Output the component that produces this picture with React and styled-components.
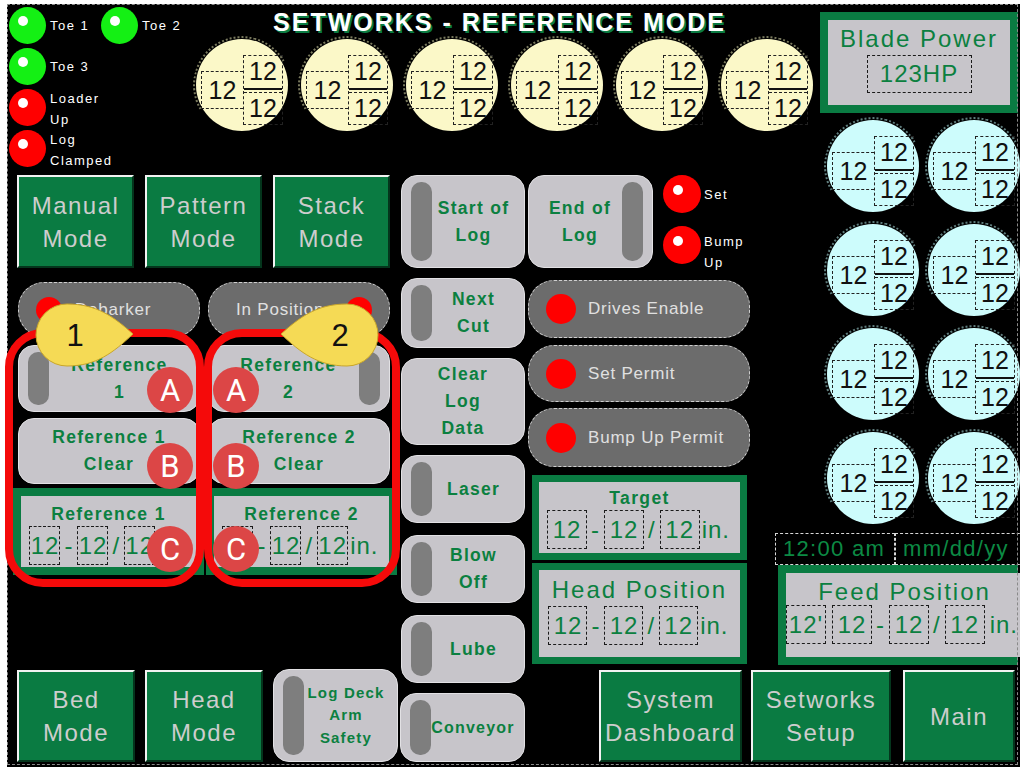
import React from 'react';
import styled, { createGlobalStyle } from 'styled-components';

const GREEN = '#0a7b42';
const TEXT_GREEN = '#0b8040';
const LIGHT = '#c7c5ca';

const GlobalStyle = createGlobalStyle`
  html, body {
    margin: 0;
    padding: 0;
    background: #000;
  }
  body {
    font-family: "Liberation Sans", Arial, sans-serif;
  }
`;

const Screen = styled.div`
  position: relative;
  width: 1020px;
  height: 767px;
  overflow: hidden;
  background: #000;
  display: grid;
  grid-template-columns: 400px 127px 221px 272px;
  grid-template-rows: 172px 595px;
  grid-template-areas:
    'head head head right'
    'left mid ctrl right';

  &::before {
    content: '';
    position: absolute;
    inset: 0;
    border-top: 4px solid #fff;
    border-left: 7px solid #fff;
    pointer-events: none;
  }
  &::after {
    content: '';
    position: absolute;
    left: 7px;
    top: 4px;
    right: 2px;
    bottom: 2px;
    border: 1px dashed #8a8a8a;
    pointer-events: none;
  }
`;

/* ---------- header ---------- */

const Header = styled.div`
  grid-area: head;
  display: flex;
`;

const Indicators = styled.div`
  flex: none;
  width: 190px;
  box-sizing: border-box;
  padding: 7px 0 0 9px;
  display: flex;
  flex-direction: column;
  gap: 4px;
`;

const LampRow = styled.div`
  display: flex;
  align-items: center;
  height: 37px;
  gap: 8px;
`;

const LampItem = styled.div`
  display: flex;
  align-items: center;
  gap: 4px;
  width: ${p => (p.$w ? `${p.$w}px` : 'auto')};
`;

const Lamp = styled.span`
  position: relative;
  flex: none;
  width: ${p => p.$size || 37}px;
  height: ${p => p.$size || 37}px;
  border-radius: 50%;
  background: ${p => (p.$on ? '#14f014' : '#ff0000')};

  &::after {
    content: '';
    position: absolute;
    left: 39%;
    top: 39%;
    width: 10px;
    height: 10px;
    border-radius: 50%;
    background: #fff;
    transform: translate(-50%, -50%);
  }
`;

const LampLabel = styled.span`
  color: #fff;
  font-size: 13px;
  line-height: 21px;
  letter-spacing: 1.5px;
  white-space: nowrap;
  margin-top: ${p => p.$mt || 0}px;
`;

const HeaderCenter = styled.div`
  flex: none;
  width: 625px;
  box-sizing: border-box;
  padding-left: 6px;
  display: flex;
  flex-direction: column;
`;

const Title = styled.div`
  margin-top: 7px;
  padding-right: 12px;
  text-align: center;
  color: #fff;
  font-weight: bold;
  font-size: 25px;
  line-height: 30px;
  letter-spacing: 2px;
  text-shadow: 2px 2px 0 ${GREEN};
`;

const DialRow = styled.div`
  margin-top: 2px;
  display: flex;
  gap: 13px;
`;

const DialFace = styled.div`
  position: relative;
  flex: none;
  width: 92px;
  height: 92px;
  box-sizing: border-box;
  padding-top: 10px;
  border-radius: 50%;
  background: ${p => (p.$tone === 'cyan' ? '#cdfcfc' : '#fbf8c8')};
  display: flex;
  align-items: center;
  justify-content: center;
  color: #111;
  font-size: 25px;

  &::before {
    content: '';
    position: absolute;
    inset: -3px;
    border-radius: 50%;
    border: 2px dotted ${p => (p.$tone === 'cyan' ? '#5f7d7d' : '#7a7a5e')};
    border-right-color: transparent;
    border-bottom-color: transparent;
    transform: rotate(15deg);
  }
`;

const WholeBox = styled.div`
  box-sizing: border-box;
  width: 42px;
  height: 38px;
  border: 1px dashed #222;
  border-right: none;
  display: flex;
  align-items: center;
  justify-content: center;
`;

const FracBox = styled.div`
  box-sizing: border-box;
  width: 40px;
  height: 70px;
  border: 1px dashed #222;
  display: flex;
  flex-direction: column;
`;

const FracNum = styled.div`
  flex: 1;
  display: flex;
  align-items: center;
  justify-content: center;
  border-bottom: 2px solid #111;
`;

const FracDen = styled.div`
  flex: 1;
  margin-top: 2px;
  display: flex;
  align-items: center;
  justify-content: center;
  border-top: 1px dashed #222;
`;

const Dial = ({ tone }) => (
  <DialFace $tone={tone}>
    <WholeBox>12</WholeBox>
    <FracBox>
      <FracNum>12</FracNum>
      <FracDen>12</FracDen>
    </FracBox>
  </DialFace>
);

/* ---------- buttons ---------- */

const GreenButton = styled.div`
  box-sizing: border-box;
  flex: none;
  width: ${p => p.$w}px;
  height: ${p => p.$h || 93}px;
  margin-left: ${p => p.$ml || 0}px;
  display: flex;
  align-items: center;
  justify-content: center;
  text-align: center;
  background: ${GREEN};
  border-top: 2px solid #f2f2f2;
  border-left: 2px solid #f2f2f2;
  border-right: 2px solid #04351c;
  border-bottom: 2px solid #04351c;
  color: #cdcdcd;
  font-size: 24px;
  line-height: 33px;
  letter-spacing: 1.5px;
`;

const LightButton = styled.div`
  box-sizing: border-box;
  flex: none;
  width: ${p => p.$w}px;
  height: ${p => p.$h}px;
  margin-top: ${p => p.$mt || 0}px;
  margin-left: ${p => p.$ml || 0}px;
  display: flex;
  flex-direction: ${p => (p.$bar === 'right' ? 'row-reverse' : 'row')};
  padding: 6px 9px;
  border-radius: 16px;
  background: ${LIGHT};
  border: 1px solid #e2e1e4;
  color: ${TEXT_GREEN};
  font-weight: bold;
  font-size: ${p => p.$fs || 17.5}px;
  line-height: ${p => p.$lh || 27}px;
  letter-spacing: ${p => (p.$ls === undefined ? 1.3 : p.$ls)}px;
  text-align: center;
`;

const SideBar = styled.span`
  flex: none;
  width: 21px;
  border-radius: 10px;
  background: #7e7e7e;
`;

const ButtonText = styled.span`
  flex: 1;
  display: flex;
  flex-direction: column;
  justify-content: center;
  align-items: center;
  white-space: nowrap;
`;

const Push = ({ bar, children, ...rest }) => (
  <LightButton $bar={bar} {...rest}>
    {bar && <SideBar />}
    <ButtonText>{children}</ButtonText>
  </LightButton>
);

const Pill = styled.div`
  box-sizing: border-box;
  flex: none;
  width: ${p => p.$w || 222}px;
  height: ${p => p.$h}px;
  margin-top: ${p => p.$mt || 0}px;
  margin-left: ${p => p.$ml || 0}px;
  display: flex;
  align-items: center;
  gap: 12px;
  padding: 0 17px;
  background: #6c6c6c;
  border: 1px dashed #cfcfcf;
  border-radius: 26px;
  color: #e0e0e0;
  font-size: 17px;
  letter-spacing: 0.8px;
  white-space: nowrap;
`;

const PillDot = styled.span`
  flex: none;
  width: ${p => p.$size || 30}px;
  height: ${p => p.$size || 30}px;
  border-radius: 50%;
  background: #ff0000;
`;

const PillText = styled.span`
  flex: 1;
  text-align: ${p => p.$align || 'left'};
  padding: ${p => p.$pad || '0'};
`;

/* ---------- readouts ---------- */

const Readout = styled.div`
  box-sizing: border-box;
  flex: none;
  width: ${p => p.$w}px;
  height: ${p => p.$h}px;
  margin-top: ${p => p.$mt || 0}px;
  margin-left: ${p => p.$ml || 0}px;
  padding: ${p => p.$pad || 7}px;
  background: ${GREEN};
  display: flex;
`;

const ReadoutInner = styled.div`
  flex: 1;
  background: ${LIGHT};
  display: flex;
  flex-direction: column;
  align-items: center;
  color: ${TEXT_GREEN};
`;

const ReadoutTitle = styled.div`
  padding-top: ${p => p.$pt || 0}px;
  font-size: ${p => (p.$small ? 17.5 : 24)}px;
  font-weight: ${p => (p.$small ? 'bold' : 'normal')};
  line-height: ${p => (p.$small ? 22 : 30)}px;
  letter-spacing: ${p => (p.$small ? 1.4 : 2)}px;
  white-space: nowrap;
`;

const NumRow = styled.div`
  margin-top: ${p => p.$mt || 0}px;
  display: flex;
  align-items: center;
  font-size: 24px;
  letter-spacing: 1px;
  white-space: nowrap;
`;

const NumBox = styled.span`
  box-sizing: border-box;
  flex: none;
  width: ${p => p.$w || 40}px;
  height: ${p => p.$h || 39}px;
  border: 1px dashed ${p => p.$line || '#1a1a1a'};
  display: flex;
  align-items: center;
  justify-content: center;
`;

const Sep = styled.span`
  margin: 0 ${p => p.$m || 4}px;
`;

const Inches = ({ w }) => (
  <>
    <NumBox $w={w}>12</NumBox>
    <Sep>-</Sep>
    <NumBox $w={w}>12</NumBox>
    <Sep>/</Sep>
    <NumBox $w={w}>12</NumBox>
    <Sep $m={2}>in.</Sep>
  </>
);

/* ---------- left column ---------- */

const LeftCol = styled.div`
  grid-area: left;
  display: flex;
  flex-direction: column;
`;

const ButtonRow = styled.div`
  display: flex;
  align-items: flex-end;
  gap: ${p => p.$gap || 0}px;
  margin-top: ${p => p.$mt || 0}px;
  padding-left: ${p => p.$pl || 0}px;
  height: ${p => (p.$h ? `${p.$h}px` : 'auto')};
`;

const Group = styled.div`
  position: relative;
  margin-top: 14px;
  display: flex;
  flex-direction: column;
`;

const BottomRow = styled(ButtonRow)`
  margin-top: auto;
  margin-bottom: 5px;
`;

const RedFrame = styled.div`
  position: absolute;
  left: ${p => p.$x}px;
  top: ${p => p.$y}px;
  width: ${p => p.$w}px;
  height: ${p => p.$h}px;
  box-sizing: border-box;
  border: 8px solid #f50a0a;
  border-radius: 38px;
  z-index: 2;
  pointer-events: none;
`;

const CalloutWrap = styled.svg`
  position: absolute;
  left: ${p => p.$x}px;
  top: ${p => p.$y}px;
  z-index: 3;
  overflow: visible;
`;

const Badge = styled.div`
  position: absolute;
  left: ${p => p.$x}px;
  top: ${p => p.$y}px;
  width: 46px;
  height: 46px;
  border-radius: 50%;
  background: #dc4646;
  color: #fff;
  font-family: Roboto, "Liberation Sans", sans-serif;
  font-size: 31px;
  display: flex;
  align-items: center;
  justify-content: center;
  z-index: 4;
`;

const Callout = ({ x, y, label, flip }) => (
  <CalloutWrap $x={x} $y={y} width="102" height="64" viewBox="0 0 102 64">
    <g transform={flip ? 'translate(102 0) scale(-1 1)' : undefined}>
      <path
        d="M100 31 C80 13 63 1 34 1 A31 31 0 0 0 34 63 C63 63 80 50 100 31 Z"
        fill="#f5da55"
        stroke="#c9a62a"
        strokeWidth="1"
      />
    </g>
    <text
      x={flip ? 61 : 42}
      y="43"
      textAnchor="middle"
      fontFamily="Liberation Sans, Arial, sans-serif"
      fontSize="31"
      fill="#111"
    >
      {label}
    </text>
  </CalloutWrap>
);

/* ---------- middle / control columns ---------- */

const MidCol = styled.div`
  grid-area: mid;
  display: flex;
  flex-direction: column;
`;

const CtrlCol = styled.div`
  grid-area: ctrl;
  display: flex;
  flex-direction: column;
`;

const TopRow = styled.div`
  margin-top: 3px;
  height: 93px;
  display: flex;
`;

const LampStack = styled.div`
  margin-left: 10px;
  display: flex;
  flex-direction: column;
  gap: 13px;
`;

const SmallLampRow = styled.div`
  display: flex;
  align-items: center;
  gap: 3px;
  height: 38px;
`;

/* ---------- right column ---------- */

const RightCol = styled.div`
  grid-area: right;
  display: flex;
  flex-direction: column;
`;

const DialGrid = styled.div`
  margin: 7px 0 0 79px;
  display: grid;
  grid-template-columns: 92px 92px;
  column-gap: 9px;
  row-gap: 12px;
`;

const TimeRow = styled.div`
  margin: 9px 0 0 27px;
  height: 32px;
  display: flex;
  color: #0c8a44;
  font-size: 22px;
  letter-spacing: 1.3px;
  white-space: nowrap;
`;

const TimeBox = styled.div`
  box-sizing: border-box;
  flex: none;
  width: ${p => p.$w}px;
  height: 32px;
  padding-left: 7px;
  border: 1px dashed #d8d8d8;
  display: flex;
  align-items: center;
`;

const App = () => (
  <>
    <GlobalStyle />
    <Screen>
      <Header>
        <Indicators>
          <LampRow>
            <LampItem $w={84}>
              <Lamp $on />
              <LampLabel>Toe 1</LampLabel>
            </LampItem>
            <LampItem>
              <Lamp $on />
              <LampLabel>Toe 2</LampLabel>
            </LampItem>
          </LampRow>
          <LampRow>
            <LampItem>
              <Lamp $on />
              <LampLabel>Toe 3</LampLabel>
            </LampItem>
          </LampRow>
          <LampRow>
            <LampItem>
              <Lamp />
              <LampLabel $mt={3}>
                Loader
                <br />
                Up
              </LampLabel>
            </LampItem>
          </LampRow>
          <LampRow>
            <LampItem>
              <Lamp />
              <LampLabel $mt={3}>
                Log
                <br />
                Clamped
              </LampLabel>
            </LampItem>
          </LampRow>
        </Indicators>
        <HeaderCenter>
          <Title>SETWORKS - REFERENCE MODE</Title>
          <DialRow>
            {[0, 1, 2, 3, 4, 5].map(i => (
              <Dial key={i} />
            ))}
          </DialRow>
        </HeaderCenter>
      </Header>

      <LeftCol>
        <ButtonRow $mt={3} $pl={17} $gap={11} $h={93}>
          <GreenButton $w={117}>
            Manual
            <br />
            Mode
          </GreenButton>
          <GreenButton $w={117}>
            Pattern
            <br />
            Mode
          </GreenButton>
          <GreenButton $w={117}>
            Stack
            <br />
            Mode
          </GreenButton>
        </ButtonRow>

        <Group>
          <ButtonRow $pl={18} $gap={8} $h={55}>
            <Pill $w={182} $h={55}>
              <PillDot $size={26} />
              <PillText $align="center" $pad="0 30px 0 0">
                Debarker
              </PillText>
            </Pill>
            <Pill $w={182} $h={55}>
              <PillText $pad="0 0 0 10px">In Position</PillText>
              <PillDot $size={26} />
            </Pill>
          </ButtonRow>
          <ButtonRow $mt={8} $pl={18} $gap={8}>
            <Push bar="left" $w={182} $h={67}>
              Reference
              <br />1
            </Push>
            <Push bar="right" $w={182} $h={67}>
              Reference
              <br />2
            </Push>
          </ButtonRow>
          <ButtonRow $mt={6} $pl={18} $gap={8}>
            <Push $w={182} $h={66}>
              Reference 1
              <br />
              Clear
            </Push>
            <Push $w={182} $h={66}>
              Reference 2
              <br />
              Clear
            </Push>
          </ButtonRow>
          <ButtonRow $mt={4} $pl={13} $gap={2}>
            <Readout $w={191} $h={87} $pad={8}>
              <ReadoutInner>
                <ReadoutTitle $small $pt={7}>
                  Reference 1
                </ReadoutTitle>
                <NumRow $mt={1}>
                  <Inches w={31} />
                </NumRow>
              </ReadoutInner>
            </Readout>
            <Readout $w={191} $h={87} $pad={8}>
              <ReadoutInner>
                <ReadoutTitle $small $pt={7}>
                  Reference 2
                </ReadoutTitle>
                <NumRow $mt={1}>
                  <Inches w={31} />
                </NumRow>
              </ReadoutInner>
            </Readout>
          </ButtonRow>

          <RedFrame $x={5} $y={47} $w={199} $h={258} />
          <RedFrame $x={204} $y={47} $w={196} $h={258} />
          <Callout x={33} y={21} label="1" />
          <Callout x={279} y={21} label="2" flip />
          <Badge $x={147} $y={85}>A</Badge>
          <Badge $x={213} $y={85}>A</Badge>
          <Badge $x={147} $y={161}>B</Badge>
          <Badge $x={213} $y={161}>B</Badge>
          <Badge $x={147} $y={244}>C</Badge>
          <Badge $x={213} $y={244}>C</Badge>
        </Group>

        <BottomRow $pl={17} $gap={10}>
          <GreenButton $w={118} $h={92}>
            Bed
            <br />
            Mode
          </GreenButton>
          <GreenButton $w={118} $h={92}>
            Head
            <br />
            Mode
          </GreenButton>
          <Push bar="left" $w={125} $h={93} $fs={15} $lh={22.5} $ls={1.2}>
            Log Deck
            <br />
            Arm
            <br />
            Safety
          </Push>
        </BottomRow>
      </LeftCol>

      <MidCol>
        <Push bar="left" $w={124} $h={93} $mt={3} $ml={1}>
          Start of
          <br />
          Log
        </Push>
        <Push bar="left" $w={124} $h={70} $mt={10} $ml={1}>
          Next
          <br />
          Cut
        </Push>
        <Push $w={124} $h={87} $mt={10} $ml={1}>
          Clear
          <br />
          Log
          <br />
          Data
        </Push>
        <Push bar="left" $w={124} $h={68} $mt={10} $ml={1}>
          Laser
        </Push>
        <Push bar="left" $w={124} $h={68} $mt={12} $ml={1}>
          Blow
          <br />
          Off
        </Push>
        <Push bar="left" $w={124} $h={68} $mt={12} $ml={1}>
          Lube
        </Push>
        <Push bar="left" $w={125} $h={69} $mt={10} $fs={16} $ls={1.2}>
          Conveyor
        </Push>
      </MidCol>

      <CtrlCol>
        <TopRow>
          <Push bar="right" $w={125} $h={93} $ml={1}>
            End of
            <br />
            Log
          </Push>
          <LampStack>
            <SmallLampRow>
              <Lamp $size={38} />
              <LampLabel>Set</LampLabel>
            </SmallLampRow>
            <SmallLampRow>
              <Lamp $size={38} />
              <LampLabel $mt={14}>
                Bump
                <br />
                Up
              </LampLabel>
            </SmallLampRow>
          </LampStack>
        </TopRow>
        <Pill $h={58} $mt={12} $ml={1}>
          <PillDot />
          <PillText>Drives Enable</PillText>
        </Pill>
        <Pill $h={57} $mt={7} $ml={1}>
          <PillDot />
          <PillText>Set Permit</PillText>
        </Pill>
        <Pill $h={59} $mt={6} $ml={1}>
          <PillDot />
          <PillText>Bump Up Permit</PillText>
        </Pill>
        <Readout $w={215} $h={85} $mt={8} $ml={5}>
          <ReadoutInner>
            <ReadoutTitle $small $pt={5}>
              Target
            </ReadoutTitle>
            <NumRow $mt={1}>
              <Inches w={40} />
            </NumRow>
          </ReadoutInner>
        </Readout>
        <Readout $w={215} $h={101} $mt={3} $ml={5}>
          <ReadoutInner>
            <ReadoutTitle $pt={5}>Head Position</ReadoutTitle>
            <NumRow $mt={1}>
              <Inches w={39} />
            </NumRow>
          </ReadoutInner>
        </Readout>
        <ButtonRow $mt={6} $pl={72}>
          <GreenButton $w={143} $h={92}>
            System
            <br />
            Dashboard
          </GreenButton>
        </ButtonRow>
      </CtrlCol>

      <RightCol>
        <Readout $w={198} $h={101} $mt={12} $ml={72} $pad={8}>
          <ReadoutInner>
            <ReadoutTitle $pt={4}>Blade Power</ReadoutTitle>
            <NumRow $mt={1}>
              <NumBox $w={105} $h={38}>
                123HP
              </NumBox>
            </NumRow>
          </ReadoutInner>
        </Readout>
        <DialGrid>
          {[0, 1, 2, 3, 4, 5, 6, 7].map(i => (
            <Dial key={i} tone="cyan" />
          ))}
        </DialGrid>
        <TimeRow>
          <TimeBox $w={120}>12:00 am</TimeBox>
          <TimeBox $w={140}>mm/dd/yy</TimeBox>
        </TimeRow>
        <Readout $w={240} $h={100} $ml={30} $pad={8}>
          <ReadoutInner>
            <ReadoutTitle $pt={4}>Feed Position</ReadoutTitle>
            <NumRow $mt={-2}>
              <NumBox>12'</NumBox>
              <Sep $m={3} />
              <NumBox>12</NumBox>
              <Sep>-</Sep>
              <NumBox>12</NumBox>
              <Sep>/</Sep>
              <NumBox>12</NumBox>
              <Sep $m={5}>in.</Sep>
            </NumRow>
          </ReadoutInner>
        </Readout>
        <ButtonRow $mt={5} $pl={3} $gap={12}>
          <GreenButton $w={140} $h={92}>
            Setworks
            <br />
            Setup
          </GreenButton>
          <GreenButton $w={112} $h={92}>
            Main
          </GreenButton>
        </ButtonRow>
      </RightCol>
    </Screen>
  </>
);

export default App;
